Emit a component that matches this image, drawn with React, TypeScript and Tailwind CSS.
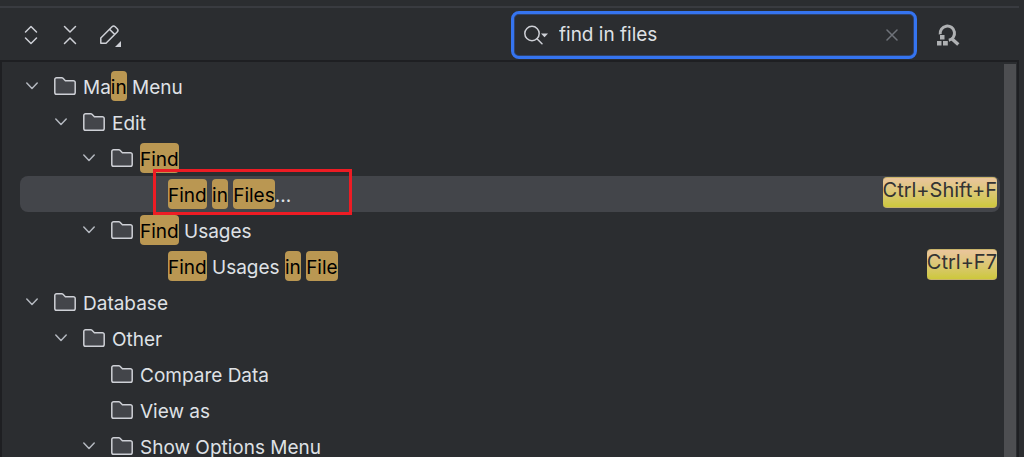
import { Fragment, useState } from "react";

type Row = {
  level: number;
  parts: string[];
  folder?: boolean;
  open?: boolean;
  shortcut?: string;
  selected?: boolean;
};

// Text wrapped in square brackets is a search hit.
const rows: Row[] = [
  { level: 0, folder: true, open: true, parts: ["Ma", "[in]", " Menu"] },
  { level: 1, folder: true, open: true, parts: ["Edit"] },
  { level: 2, folder: true, open: true, parts: ["[Find]"] },
  { level: 3, selected: true, shortcut: "Ctrl+Shift+F", parts: ["[Find]", " ", "[in]", " ", "[Files]", "..."] },
  { level: 2, folder: true, open: true, parts: ["[Find]", " Usages"] },
  { level: 3, shortcut: "Ctrl+F7", parts: ["[Find]", " Usages ", "[in]", " ", "[File]"] },
  { level: 0, folder: true, open: true, parts: ["Database"] },
  { level: 1, folder: true, open: true, parts: ["Other"] },
  { level: 2, folder: true, parts: ["Compare Data"] },
  { level: 2, folder: true, parts: ["View as"] },
  { level: 2, folder: true, open: true, parts: ["Show Options Menu"] },
];

const indents = ["pl-0", "pl-[29px]", "pl-[57px]", "pl-[148px]"];

function ExpandAllIcon() {
  return (
    <svg viewBox="0 0 24 24" className="size-6" fill="none" stroke="#ced0d6" strokeWidth="1.5" strokeLinecap="round" strokeLinejoin="round">
      <path d="M6.5 9 12 3.5 17.5 9M6.5 15l5.500 5.500 5.500-5.500" />
    </svg>
  );
}

function CollapseAllIcon() {
  return (
    <svg viewBox="0 0 24 24" className="size-6" fill="none" stroke="#ced0d6" strokeWidth="1.5" strokeLinecap="round" strokeLinejoin="round">
      <path d="M6.500 3.500 12 9l5.500-5.500M6.500 20.500 12 15l5.500 5.500" />
    </svg>
  );
}

function EditIcon() {
  return (
    <svg viewBox="0 0 24 24" className="size-6" fill="none" stroke="#ced0d6" strokeWidth="1.500" strokeLinejoin="round">
      <path d="M3.800 20.200V15L15 3.700a2.300 2.300 0 0 1 3.200 0l2 2a2.300 2.300 0 0 1 0 3.200L9 20.200zM12.500 6.200l5.200 5.200" />
      <path d="M24 18v6h-6z" fill="#ced0d6" stroke="none" />
    </svg>
  );
}

function SearchIcon() {
  return (
    <svg viewBox="0 0 26 24" className="h-6 w-[26px]" fill="none" stroke="#ced0d6" strokeWidth="1.500">
      <circle cx="9" cy="10.500" r="7.200" />
      <path d="M14 15.700l5 5" strokeLinecap="round" />
      <path d="M18 10.500h7l-3.500 3.700z" fill="#ced0d6" stroke="none" />
    </svg>
  );
}

function FindByShortcutIcon() {
  return (
    <svg viewBox="0 0 24 24" className="size-6" fill="none">
      <path d="M4.200 11.300A7.200 7.200 0 1 1 12.800 17.300" stroke="#afb1b3" strokeWidth="3" />
      <path d="M15.500 15.500l6.800 6" stroke="#afb1b3" strokeWidth="3.400" />
      <path d="M4 12h4.500v4.500H4zM1 18h4.500v4.500H1zM7 18h4.800v4.500H7z" fill="#afb1b3" />
    </svg>
  );
}

function FolderIcon() {
  return (
    <svg viewBox="0 0 22 18" className="h-[18px] w-[22px] shrink-0" fill="#43454a" stroke="#ced0d6" strokeWidth="1.500" strokeLinejoin="round">
      <path d="M.8 2.600A1.800 1.800 0 0 1 2.600.8h5.200c.5 0 .9.200 1.200.5l2.400 2.400h8A1.800 1.800 0 0 1 21.200 5.500v9.900a1.800 1.800 0 0 1-1.800 1.800H2.600A1.800 1.800 0 0 1 .8 15.400z" />
    </svg>
  );
}

function ChevronIcon() {
  return (
    <svg viewBox="0 0 12 8" className="h-2 w-3" fill="none" stroke="#b4b8bf" strokeWidth="1.500" strokeLinecap="round" strokeLinejoin="round">
      <path d="M.8 1 6 6.400 11.200 1" />
    </svg>
  );
}

function Label({ parts }: { parts: string[] }) {
  return (
    <span className="h-[30px] whitespace-pre leading-[33px]">
      {parts.map((part, i) =>
        part.startsWith("[") ? (
          <mark key={i} className="inline-block h-[30px] rounded-[4px] bg-[#ba9752] text-black">
            {part.slice(1, -1)}
          </mark>
        ) : (
          <Fragment key={i}>{part}</Fragment>
        ),
      )}
    </span>
  );
}

function TreeRow({ row }: { row: Row }) {
  return (
    <li
      role="treeitem"
      aria-level={row.level + 1}
      aria-selected={!!row.selected}
      aria-expanded={row.open}
      className={`relative flex h-9 items-center rounded-lg pr-[3px] ${indents[row.level]} ${row.selected ? "bg-[#43454a]" : ""}`}
    >
      {row.folder && (
        <>
          <span className="mr-[10px] flex w-6 shrink-0 justify-center">
            {row.open && (
              <button type="button" aria-label="Collapse">
                <ChevronIcon />
              </button>
            )}
          </span>
          <FolderIcon />
          <span className="w-[7px]" />
        </>
      )}
      <Label parts={row.parts} />
      {row.shortcut && (
        <kbd className="mt-[1px] ml-auto h-[31px] self-start rounded-[4px] border-y border-[#c9b46a] bg-linear-to-b from-[#eac59c] to-[#cdc83a] font-[Inter,sans-serif] text-[20px] leading-[25px] text-[#333333]">
          {row.shortcut}
        </kbd>
      )}
      {row.selected && (
        <span className="pointer-events-none absolute -top-[7px] left-[133px] h-[46px] w-[199px] border-3 border-[#ed1c24]" />
      )}
    </li>
  );
}

export default function App() {
  const [query, setQuery] = useState("find in files");
  return (
    <main className="flex h-screen flex-col overflow-hidden bg-[#2b2d30] pt-[6px] pr-[5px] font-[Inter,sans-serif] text-[19px] text-[#dfe1e5]">
      <header className="flex h-[54px] shrink-0 items-center border-t-2 border-[#393b40] pt-[2px] pr-[59px] pl-[19px]">
        <div className="flex gap-[15px]">
          <button type="button" aria-label="Expand all">
            <ExpandAllIcon />
          </button>
          <button type="button" aria-label="Collapse all">
            <CollapseAllIcon />
          </button>
          <button type="button" aria-label="Edit shortcut">
            <EditIcon />
          </button>
        </div>
        <div className="mr-[19px] ml-auto flex h-12 w-[406px] items-center rounded-lg border-3 border-[#3574f0] pr-4 pl-[9px] inset-ring inset-ring-[#2e436e]">
          <button type="button" aria-label="Search history">
            <SearchIcon />
          </button>
          <input
            type="text"
            aria-label="Search actions"
            value={query}
            onChange={(e) => setQuery(e.target.value)}
            className="ml-[10px] min-w-0 flex-1 bg-transparent outline-none"
          />
          <button type="button" aria-label="Clear search" onClick={() => setQuery("")}>
            <svg viewBox="0 0 12 12" className="size-3" stroke="#6f737a" strokeWidth="1.500" strokeLinecap="round">
              <path d="M1 1l10 10M11 1 1 11" />
            </svg>
          </button>
        </div>
        <button type="button" aria-label="Find actions by shortcut">
          <FindByShortcutIcon />
        </button>
      </header>
      <section className="flex min-h-0 flex-1 border-2 border-b-0 border-[#1e1f22]">
        <ul role="tree" aria-label="Keymap actions" className="flex-1 overflow-hidden pt-[6px] pr-1 pl-[18px]">
          {rows.map((row, i) => (
            <TreeRow key={i} row={row} />
          ))}
        </ul>
        <div className="mt-[2px] mr-[1px] w-3 bg-[#4d4e51]" />
      </section>
    </main>
  );
}
